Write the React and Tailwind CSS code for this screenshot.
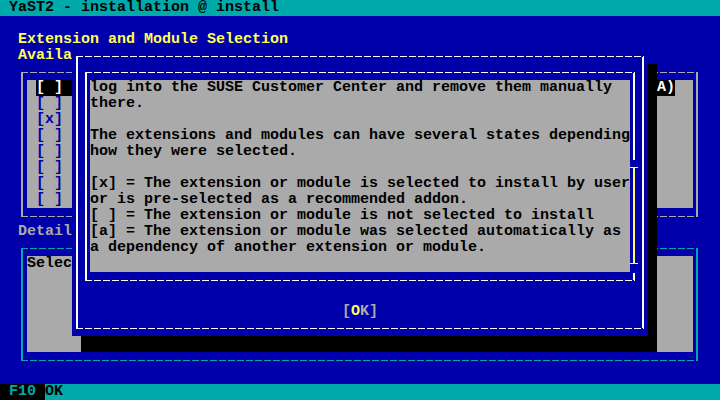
const dashW =
  "bg-[repeating-linear-gradient(90deg,#ffffff_0px,#ffffff_7px,transparent_7px,transparent_9px)]";
const dashG =
  "bg-[repeating-linear-gradient(90deg,#aaaaaa_0px,#aaaaaa_7px,transparent_7px,transparent_9px)]";
const dashC =
  "bg-[repeating-linear-gradient(90deg,#00aaaa_0px,#00aaaa_7px,transparent_7px,transparent_9px)]";

const items = ["[ ]", "[x]", "[ ]", "[ ]", "[ ]", "[ ]", "[ ]"];

const helpLines = [
  "log into the SUSE Customer Center and remove them manually",
  "there.",
  "",
  "The extensions and modules can have several states depending",
  "how they were selected.",
  "",
  "[x] = The extension or module is selected to install by user",
  "or is pre-selected as a recommended addon.",
  "[ ] = The extension or module is not selected to install",
  "[a] = The extension or module was selected automatically as",
  "a dependency of another extension or module.",
  "",
];

function Dialog() {
  return (
    <div className="absolute left-[72px] top-[48px] w-[576px] h-[288px] bg-[#0000aa] shadow-[9px_16px_0_0_#000000] pt-[8px]">
      <div className="ml-[4px] w-[568px] flex flex-col">
        <div className={`h-px ${dashW}`} />
        <div className="h-[271px] border-x-2 border-white flex flex-col">
          <div className="mt-[15px] ml-[7px] w-[553px] flex flex-col">
            <div className={`h-px w-[550px] ${dashW}`} />
            <div className="h-[207px] flex">
              <div className="w-[2px] h-full bg-white" />
              <div className="w-[3px]" />
              <div className="mt-[7px] w-[540px] h-[192px] bg-[#aaaaaa] text-black flex flex-col">
                {helpLines.map((l, i) => (
                  <div key={i} className="h-4">
                    {l}
                  </div>
                ))}
              </div>
              <div className="w-[8px] flex flex-col">
                <div className="ml-[3px] w-[2px] h-[87px] bg-white" />
                <div className="h-[7px]" />
                <div className="h-px w-[8px] bg-[#ffff55]" />
                <div className="ml-[3px] w-[2px] h-[95px] bg-[#ffff55]" />
                <div className="h-px w-[8px] bg-[#ffff55]" />
                <div className="h-[9px]" />
                <div className="ml-[3px] w-[2px] h-[7px] bg-white" />
              </div>
            </div>
            <div className={`h-px w-[550px] ${dashW}`} />
          </div>
          <div className="mt-[23px] h-4 text-center text-[#aaaaaa]">
            [<span className="text-[#ffff55]">O</span>K]
          </div>
        </div>
        <div className={`h-px ${dashW}`} />
      </div>
    </div>
  );
}

export default function App() {
  return (
    <div className="relative w-[720px] h-[400px] overflow-hidden bg-[#0000aa] [font-family:'Liberation_Mono',monospace] font-bold text-[15px] leading-[16px] whitespace-pre flex flex-col">
      <div className="h-4 shrink-0 bg-[#00aaaa] text-black pl-[9px]">
        YaST2 - installation @ install
      </div>
      <div className="h-4 shrink-0" />
      <div className="h-4 shrink-0 pl-[18px] text-[#ffff55]">
        Extension and Module Selection
      </div>
      <div className="h-4 shrink-0 pl-[18px] text-[#ffff55]">Availa</div>

      <div className="ml-[21px] mt-2 w-[677px] shrink-0 flex flex-col">
        <div className={`h-px ${dashG}`} />
        <div className="h-[143px] border-x-2 border-[#aaaaaa]">
          <div className="mt-[7px] ml-[4px] w-[666px] h-[128px] bg-[#aaaaaa] pl-[9px] flex flex-col text-[#0000aa]">
            <div className="h-4 w-[639px] bg-black text-white flex justify-between">
              <span>[ ]</span>
              <span>A)</span>
            </div>
            {items.map((t, i) => (
              <div key={i} className="h-4">
                {t}
              </div>
            ))}
          </div>
        </div>
        <div className={`h-px ${dashG}`} />
      </div>

      <div className="mt-[7px] h-4 shrink-0 pl-[18px] text-[#aaaaaa]">Detail</div>

      <div className="ml-[21px] mt-2 w-[677px] shrink-0 flex flex-col">
        <div className={`h-px ${dashC}`} />
        <div className="h-[111px] border-x-2 border-[#00aaaa]">
          <div className="mt-[7px] ml-[4px] w-[666px] h-[96px] bg-[#aaaaaa] text-black">
            Selec
          </div>
        </div>
        <div className={`h-px ${dashC}`} />
      </div>

      <div className="mt-auto h-4 shrink-0 bg-[#00aaaa] flex">
        <span className="w-[45px] bg-black text-[#00aaaa] pl-[9px]">F10</span>
        <span className="text-black">OK</span>
      </div>

      <Dialog />
    </div>
  );
}
